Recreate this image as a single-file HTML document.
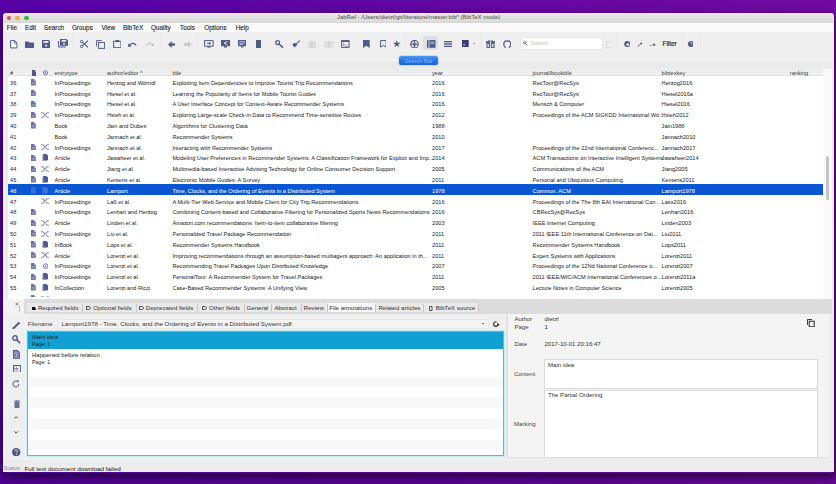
<!DOCTYPE html>
<html><head><meta charset="utf-8">
<style>
*{margin:0;padding:0;box-sizing:border-box}
html,body{width:836px;height:484px;overflow:hidden}
body{position:relative;background:linear-gradient(180deg,rgba(0,0,0,0) 0%,rgba(0,0,0,0.1) 100%),linear-gradient(90deg,#5602a6 0%,#6206a3 50%,#700aa0 100%);font-family:"Liberation Sans",sans-serif;color:#2a2a2a}
.a{position:absolute}
#shadow{position:absolute;left:3px;top:14px;width:831px;height:459px;box-shadow:0 3px 8px 1px rgba(22,0,36,0.75);border-radius:4px}
#win{position:absolute;left:3px;top:13px;width:831px;height:459px;background:#ececec;border-radius:4px 4px 1px 1px;overflow:hidden;box-shadow:inset 0 0 0 0.6px rgba(255,235,255,0.9)}
#titlebar{position:absolute;left:3px;top:13px;width:831px;height:9.5px;background:linear-gradient(#f6e4f6 0,#f6e4f6 8%,#e6e5e6 20%,#dadada 90%,#d2d2d2 100%);border-radius:4px 4px 0 0}
.tl{position:absolute;top:15.5px;width:4.7px;height:4.7px;border-radius:50%}
#title{position:absolute;left:0.6px;width:836px;top:13.2px;height:9.5px;line-height:9.5px;text-align:center;font-size:6px;color:#4a4a4a}
#menubar{position:absolute;left:3px;top:22.5px;width:831px;height:9.5px;background:#f9f9f9}
.m{position:absolute;top:22.8px;line-height:9px;font-size:6.4px;color:#222;-webkit-text-stroke:0.1px #222}
#toolbar{position:absolute;left:3px;top:32px;width:831px;height:30px;background:#efefef}
.ti{position:absolute}
.sep{position:absolute;top:33px;width:0.8px;height:15px;background:#e7e7e7}
#table{position:absolute;left:8px;top:62px;width:815px;height:234.7px;background:#fff;overflow:hidden}
#thead{position:absolute;left:0;top:0;width:815px;height:14px;background:linear-gradient(#e8e8e8,#eeeeee 80%,#f6f6f6 86%,#dcdcdc 100%)}
.h{position:absolute;top:6.8px;line-height:8px;font-size:5.6px;color:#3a3a3a}
.row{position:absolute;left:0;width:815px;height:10.8px}
.row .c{position:absolute;top:1.8px;line-height:10.8px;font-size:5.65px;color:#2a2a2a;white-space:nowrap;-webkit-text-stroke:0.03px #2a2a2a}
.row.sel{background:#0b56d2}
.row.sel .c{color:#fff;-webkit-text-stroke:0}
.ic{position:absolute;top:1.4px}
#vscroll{position:absolute;left:823px;top:69px;width:9px;height:230px;background:#fafafa}
#thumb{position:absolute;left:825.5px;top:155.5px;width:3px;height:44px;background:#c4c4c4;border-radius:1.5px}
#tabbar{position:absolute;left:24px;top:299px;width:808px;height:15px;background:#dcdcdc}
#tableft{position:absolute;left:3px;top:299px;width:21px;height:15px;background:#f3f3f3}
.tab{position:absolute;top:303.2px;height:9px;line-height:9.6px;font-size:6.1px;color:#333;white-space:nowrap}
.tsep{position:absolute;top:304px;width:0.8px;height:7.5px;background:#c8c8c8}
#side{position:absolute;left:3px;top:314px;width:505px;height:146px;background:#efefef}
.lbl{position:absolute;font-size:6.05px;color:#444;white-space:nowrap}
#fname{position:absolute;left:58.6px;top:319.9px;width:429.5px;height:8.4px;background:#f4f4f4;border-radius:1px;box-shadow:0 0 0 0.5px #e0e0e0}
#alist{position:absolute;left:27px;top:330.6px;width:476.6px;height:125.6px;background:#fff;border:0.9px solid #70b0c0;box-shadow:0 0 0 1.2px #c8ecf4;overflow:hidden}
.ai{position:absolute;left:0;width:476px;height:18.2px}
.ai .t1{position:absolute;left:4px;top:2.6px;font-size:6px;line-height:7px;color:#222;white-space:nowrap}
.ai .t2{position:absolute;left:4px;top:9.4px;font-size:5.3px;line-height:7px;color:#222;white-space:nowrap}
#rpanel{position:absolute;left:507px;top:314px;width:321.7px;height:143.6px;background:#f4f4f4;border-left:0.8px solid #dedede;border-bottom:0.8px solid #e0e0e0;box-shadow:-2.2px 0 0 -1.4px #e4e4e4}
.ta{position:absolute;left:544.2px;width:274px;background:#fff;border:0.7px solid #dadada}
#status{position:absolute;left:3px;top:460px;width:831px;height:12px;background:#ececec}
</style></head>
<body>
<div id="shadow"></div>
<div id="win"></div>
<div id="titlebar"></div>
<div class="tl" style="left:6.65px;background:#e8524c"></div>
<div class="tl" style="left:15.25px;background:#efb034"></div>
<div class="tl" style="left:24.05px;background:#36b541"></div>
<div id="title">JabRef - /Users/dietzl/git/literature/master.bib* (BibTeX mode)</div>
<div id="menubar"></div>
<span class="m" style="left:6.8px">File</span>
<span class="m" style="left:24.9px">Edit</span>
<span class="m" style="left:43.9px">Search</span>
<span class="m" style="left:71.9px">Groups</span>
<span class="m" style="left:101.4px">View</span>
<span class="m" style="left:122.9px">BibTeX</span>
<span class="m" style="left:150.9px">Quality</span>
<span class="m" style="left:180px">Tools</span>
<span class="m" style="left:204.3px">Options</span>
<span class="m" style="left:235.7px">Help</span>
<div id="toolbar"></div>
<svg class="ti" style="left:10px;top:40px" width="7.5" height="8.5" viewBox="0 0 7.5 8.5"><path d="M0.6 0.6h4l2.3 2.3v5H0.6z" stroke="#4f5b88" stroke-width="1" fill="#fff"/><path d="M4.4 0.6v2.5h2.5" stroke="#4f5b88" stroke-width="0.9" fill="none"/></svg>
<svg class="ti" style="left:25px;top:41px" width="9" height="7" viewBox="0 0 9 7"><path d="M0 0.5h3.3l1 1H9V7H0z" fill="#4f5b88"/></svg>
<svg class="ti" style="left:42px;top:39.9px" width="8.2" height="8" viewBox="0 0 8.2 8"><path d="M0 0h6.7L8.2 1.5V8H0z" fill="#4f5b88"/><rect x="1.4" y="1" width="5" height="1.9" fill="#e8e8ee"/><circle cx="4.1" cy="5.6" r="1.15" fill="#e8e8ee"/></svg>
<svg class="ti" style="left:58px;top:39.3px" width="10" height="9.2" viewBox="0 0 10 9.2"><path d="M2 0h6.5L10 1.5V6.8H2z" fill="#4f5b88"/><rect x="3.5" y="0.9" width="4.6" height="1.9" fill="#e8e8ee"/><circle cx="6" cy="4.8" r="1" fill="#e8e8ee"/><path d="M0.6 2v6h7" stroke="#4f5b88" stroke-width="1" fill="none"/></svg>
<div class="sep" style="left:73px"></div>
<svg class="ti" style="left:79.6px;top:40px" width="8.6" height="8" viewBox="0 0 8.6 8"><circle cx="1.6" cy="1.6" r="1.2" stroke="#4f5b88" stroke-width="1" fill="none"/><circle cx="1.6" cy="6.4" r="1.2" stroke="#4f5b88" stroke-width="1" fill="none"/><path d="M2.6 2.3L8.4 7.5M2.6 5.7L8.4 0.5" stroke="#4f5b88" stroke-width="1.1"/></svg>
<svg class="ti" style="left:95.8px;top:39.8px" width="9.2" height="9" viewBox="0 0 9.2 9"><path d="M0.6 6.5V0.6h5" stroke="#4f5b88" stroke-width="1" fill="none"/><rect x="2.6" y="2.4" width="6" height="6" stroke="#4f5b88" stroke-width="1" fill="none"/></svg>
<svg class="ti" style="left:112.6px;top:40px" width="8.6" height="8.2" viewBox="0 0 8.6 8.2"><rect x="0.6" y="1.3" width="7.4" height="6.4" stroke="#4f5b88" stroke-width="1" fill="none"/><rect x="2.5" y="0" width="3.6" height="2" fill="#4f5b88"/></svg>
<svg class="ti" style="left:128.4px;top:41.5px" width="8.6" height="5" viewBox="0 0 8.6 5"><path d="M1 4.5C2 1 6 0 8.2 3.5" stroke="#4f5b88" stroke-width="1.3" fill="none"/><path d="M0 1.5L0.5 5L3.8 4z" fill="#4f5b88"/></svg>
<svg class="ti" style="left:144.8px;top:42px" width="9.6" height="4.5" viewBox="0 0 9.6 4.5"><path d="M8.6 4C7.6 1 3.6 0 1.4 3.5" stroke="#c8c8cc" stroke-width="1.3" fill="none"/><path d="M9.6 1.2L9.1 4.5L5.8 3.6z" fill="#c8c8cc"/></svg>
<div class="sep" style="left:160px"></div>
<svg class="ti" style="left:167.8px;top:40.5px" width="7.6" height="7" viewBox="0 0 7.6 7"><path d="M0 3.5L3.6 0V2.2H7.6V4.8H3.6V7z" fill="#4f5b88"/></svg>
<svg class="ti" style="left:184px;top:40.5px" width="7.6" height="7" viewBox="0 0 7.6 7"><path d="M7.6 3.5L4 0V2.2H0V4.8H4V7z" fill="#c8c8cc"/></svg>
<div class="sep" style="left:197px"></div>
<svg class="ti" style="left:204px;top:40px" width="9.7" height="7.8" viewBox="0 0 9.7 7.8"><rect x="0.6" y="0.6" width="8.5" height="5.6" stroke="#4f5b88" stroke-width="1" fill="none"/><path d="M3.5 6.2v1.4h3V6.2" fill="#4f5b88"/><path d="M3 3.4h3.5M5 2l1.5 1.4L5 4.8" stroke="#4f5b88" stroke-width="0.9" fill="none"/></svg>
<svg class="ti" style="left:221px;top:40px" width="9" height="7.6" viewBox="0 0 9 7.6"><rect x="0" y="0" width="9" height="6.2" fill="#4f5b88"/><path d="M3 6.2v1.4h3V6.2" fill="#4f5b88"/><path d="M6.5 1.5L3 3.2L6.5 4.8" stroke="#e6e6ee" stroke-width="1" fill="none"/></svg>
<svg class="ti" style="left:237.8px;top:40px" width="8.4" height="7.6" viewBox="0 0 8.4 7.6"><rect x="0" y="0" width="8.4" height="6.2" fill="#4f5b88"/><path d="M3 6.2v1.4h2.4V6.2" fill="#4f5b88"/><rect x="1.3" y="1.4" width="5.8" height="0.7" fill="#d8d8e4"/><rect x="1.3" y="2.8" width="5.8" height="0.7" fill="#d8d8e4"/><rect x="1.3" y="4.2" width="3.5" height="0.7" fill="#d8d8e4"/></svg>
<svg class="ti" style="left:255.7px;top:40px" width="5.5" height="8" viewBox="0 0 5.5 8"><rect x="0" y="0" width="5.5" height="8" fill="#4f5b88"/></svg>
<svg class="ti" style="left:275px;top:40px" width="8.7" height="8.2" viewBox="0 0 8.7 8.2"><circle cx="2.6" cy="2.6" r="1.9" stroke="#4f5b88" stroke-width="1.3" fill="none"/><path d="M4 4L8 7.7" stroke="#4f5b88" stroke-width="1.6"/></svg>
<svg class="ti" style="left:291.5px;top:40.3px" width="8.6" height="7.6" viewBox="0 0 8.6 7.6"><path d="M4.6 3.6L8.2 0.4" stroke="#4f5b88" stroke-width="1.1"/><path d="M0.4 4.2Q2.2 2.6 4.6 3.2L5.2 4.2Q4.6 6.8 2.2 7.4z" fill="#4f5b88"/></svg>
<svg class="ti" style="left:308px;top:40.5px" width="8.4" height="7.5" viewBox="0 0 8.4 7.5"><rect x="0" y="0" width="8.4" height="7.5" fill="#dedede"/><rect x="3" y="0" width="1.5" height="7.5" fill="#d0d0d0"/></svg>
<svg class="ti" style="left:324px;top:40.5px" width="9.6" height="7.5" viewBox="0 0 9.6 7.5"><rect x="0" y="0" width="9.6" height="7.5" fill="#e0e0e0"/><rect x="4" y="0" width="1.5" height="7.5" fill="#d2d2d2"/></svg>
<svg class="ti" style="left:341.2px;top:40px" width="8.7" height="8" viewBox="0 0 8.7 8"><rect x="0.6" y="0.6" width="7.5" height="6.8" stroke="#4f5b88" stroke-width="1" fill="none"/><rect x="0.6" y="0.6" width="7.5" height="1.4" fill="#4f5b88"/><path d="M2 3.4l1.6 1.3L2 6M4.3 6.2h2.5" stroke="#4f5b88" stroke-width="0.8" fill="none"/></svg>
<svg class="ti" style="left:363.4px;top:40px" width="6.7" height="8" viewBox="0 0 6.7 8"><path d="M0 0h6.7v8L3.35 5.8L0 8z" fill="#4f5b88"/></svg>
<svg class="ti" style="left:379.7px;top:40px" width="6.7" height="8" viewBox="0 0 6.7 8"><path d="M0.6 0.6h5.5v6.6L3.35 5.3L0.6 7.2z" stroke="#4f5b88" stroke-width="1" fill="none"/></svg>
<svg class="ti" style="left:392.6px;top:40px" width="7.6" height="7.6" viewBox="0 0 7.6 7.6"><path d="M3.8 0L4.7 2.7H7.6L5.3 4.4L6.2 7.3L3.8 5.6L1.4 7.3L2.3 4.4L0 2.7H2.9z" fill="#4f5b88"/></svg>
<div class="sep" style="left:404.5px"></div>
<svg class="ti" style="left:409.8px;top:40px" width="9" height="8.4" viewBox="0 0 9 8.4"><circle cx="4.5" cy="4.2" r="3.8" stroke="#4f5b88" stroke-width="1.1" fill="none"/><path d="M0.7 4.2h7.6M4.5 0.4v7.6" stroke="#4f5b88" stroke-width="1"/><circle cx="4.5" cy="4.2" r="1.6" fill="none" stroke="#4f5b88" stroke-width="0.7"/></svg>
<div class="ti" style="left:423px;top:36px;width:15px;height:14.2px;background:#e0e0e0;border-radius:1.5px"></div>
<svg class="ti" style="left:427px;top:40px" width="8.5" height="7.8" viewBox="0 0 8.5 7.8"><rect x="0" y="0" width="1.6" height="7.8" fill="#4f5b88"/><rect x="2.4" y="0" width="6.1" height="7.8" fill="#4f5b88"/><rect x="3.4" y="1.6" width="4" height="0.7" fill="#d8d8e4"/><rect x="3.4" y="3.2" width="4" height="0.7" fill="#d8d8e4"/></svg>
<svg class="ti" style="left:443.7px;top:41px" width="8.1" height="6.2" viewBox="0 0 8.1 6.2"><rect x="0" y="0" width="8.1" height="1.4" fill="#4f5b88"/><rect x="0" y="2.4" width="8.1" height="1.4" fill="#4f5b88"/><rect x="0" y="4.8" width="8.1" height="1.4" fill="#4f5b88"/></svg>
<svg class="ti" style="left:461.9px;top:40px" width="6.7" height="7" viewBox="0 0 6.7 7"><rect x="0" y="0" width="6.7" height="7" fill="#373a78"/><rect x="1.2" y="3.5" width="2" height="2.2" fill="#8f92c0"/></svg>
<svg class="ti" style="left:473.3px;top:43px" width="2.4" height="1.6" viewBox="0 0 2.4 1.6"><path d="M0 0h2.4L1.2 1.6z" fill="#9a9a9a"/></svg>
<div class="sep" style="left:481px"></div>
<svg class="ti" style="left:486.2px;top:40px" width="9.1" height="8" viewBox="0 0 9.1 8"><rect x="0.5" y="2" width="8.1" height="6" fill="#4f5b88"/><rect x="0" y="1.2" width="9.1" height="2" fill="#4f5b88"/><rect x="4" y="1.2" width="1.1" height="6.8" fill="#dcdce6"/><rect x="1.5" y="4" width="1.5" height="3" fill="#dcdce6"/><rect x="6" y="4" width="1.5" height="3" fill="#dcdce6"/><path d="M2 0.2L4.5 1.4L7 0.2" stroke="#4f5b88" stroke-width="0.8" fill="none"/></svg>
<svg class="ti" style="left:502.5px;top:40px" width="8.6" height="8.2" viewBox="0 0 8.6 8.2"><circle cx="4.3" cy="4.3" r="3.5" stroke="#4f5b88" stroke-width="1.3" fill="none"/><rect x="2.8" y="5.5" width="3" height="3" fill="#efefef"/><path d="M2 0.6L3 2M6.6 0.6L5.6 2" stroke="#4f5b88" stroke-width="0.9"/></svg>
<div class="ti" style="left:521px;top:38.3px;width:80.5px;height:10.3px;background:#fff;border-radius:1.5px;box-shadow:0 0 0 0.5px #e0e0e0"></div>
<svg class="ti" style="left:523px;top:41px" width="4.5" height="4.5" viewBox="0 0 4.5 4.5"><circle cx="1.6" cy="1.6" r="1.1" stroke="#555" stroke-width="0.9" fill="none"/><path d="M2.4 2.4L4.2 4.2" stroke="#555" stroke-width="1"/></svg>
<span class="ti" style="left:530.5px;top:39px;line-height:9px;font-size:5.6px;color:#c0c0c0">Search...</span>
<svg class="ti" style="left:605.8px;top:40.5px" width="5.7" height="7" viewBox="0 0 5.7 7"><rect x="0.4" y="0.4" width="4.9" height="6.2" stroke="#dadada" stroke-width="0.8" fill="none"/></svg>
<div class="sep" style="left:617px"></div>
<svg class="ti" style="left:623.7px;top:41.2px" width="6.5" height="6" viewBox="0 0 6.5 6"><circle cx="3.25" cy="3" r="3" fill="#4f5b88"/><circle cx="3.8" cy="3.5" r="1.5" fill="#dde"/></svg>
<svg class="ti" style="left:637.3px;top:41.5px" width="5.7" height="5.5" viewBox="0 0 5.7 5.5"><path d="M0.5 5L4 1.5" stroke="#555" stroke-width="0.9"/><path d="M4.2 0L4.8 1L5.7 1.3L4.8 1.7L4.2 2.7L3.8 1.7L3 1.3L3.8 1z" fill="#555"/></svg>
<svg class="ti" style="left:649.5px;top:42.5px" width="6.5" height="3.5" viewBox="0 0 6.5 3.5"><rect x="0" y="2" width="1.2" height="1.2" fill="#555"/><path d="M2.5 1.8h3M4 0.3v3M2.8 0.8l2.4 2M5.2 0.8l-2.4 2" stroke="#555" stroke-width="0.6"/></svg>
<span class="ti" style="left:662.5px;top:39px;line-height:9px;font-size:6.4px;color:#222;-webkit-text-stroke:0.15px #222">Filter</span>
<div class="sep" style="left:681.5px"></div>
<svg class="ti" style="left:687.6px;top:41.2px" width="5.9" height="5.9" viewBox="0 0 5.9 5.9"><circle cx="2.95" cy="2.95" r="2.95" fill="#4f5b88"/><path d="M2.1 2.2a0.9 0.9 0 1 1 1.2 0.9v0.6" stroke="#dde" stroke-width="0.7" fill="none"/></svg>
<div class="sep" style="left:700px"></div>
<div id="table">
<div id="thead"></div>
<span class="h" style="left:2px">#</span>
<svg class="a" style="left:24px;top:7.6px" width="4.4" height="6.2" viewBox="0 0 4.4 6.2"><path d="M0 0h2.8L4.4 1.6V6.2H0z" fill="#4f5888"/><path d="M2.8 0v1.6H4.4" fill="#b9bed6"/></svg><svg class="a" style="left:35.4px;top:7.8px" width="5" height="5.8" viewBox="0 0 5 5.8"><circle cx="2.5" cy="2.9" r="2.1" stroke="#6e78a8" stroke-width="1" fill="none"/><circle cx="2.5" cy="2.9" r="0.8" fill="#6e78a8"/></svg><span class="h" style="left:46.5px">entrytype</span>
<span class="h" style="left:99px">author/editor ^</span>
<span class="h" style="left:164.4px">title</span>
<span class="h" style="left:424px">year</span>
<span class="h" style="left:524.6px">journal/booktitle</span>
<span class="h" style="left:653.6px">bibtexkey</span>
<span class="h" style="left:781.8px">ranking</span>
<div style="position:absolute;left:0;top:14px;width:815px;height:224px">
<div class="row" style="top:0.0px"><span class="c" style="left:2px">36</span><svg class="ic" style="left:23.4px;top:3.2px" width="4.8" height="6.4" viewBox="0 0 4.8 6.4"><path d="M0 0h3L4.8 1.8V6.4H0z" fill="#69739f"/><path d="M3 0v1.8H4.8" fill="#c5cae0"/><rect x="0.8" y="3.2" width="3.2" height="0.6" fill="#aab2d0"/><rect x="0.8" y="4.6" width="3.2" height="0.6" fill="#aab2d0"/></svg><span class="c" style="left:46.5px">InProceedings</span><span class="c" style="left:99px">Herzog and Wörndl</span><span class="c" style="left:164.4px">Exploiting Item Dependencies to Improve Tourist Trip Recommendations</span><span class="c" style="left:424px">2016</span><span class="c" style="left:524.6px">RecTour@RecSys</span><span class="c" style="left:653.6px">Herzog2016</span></div>
<div class="row" style="top:10.8px"><span class="c" style="left:2px">37</span><svg class="ic" style="left:23.4px;top:3.2px" width="4.8" height="6.4" viewBox="0 0 4.8 6.4"><path d="M0 0h3L4.8 1.8V6.4H0z" fill="#69739f"/><path d="M3 0v1.8H4.8" fill="#c5cae0"/><rect x="0.8" y="3.2" width="3.2" height="0.6" fill="#aab2d0"/><rect x="0.8" y="4.6" width="3.2" height="0.6" fill="#aab2d0"/></svg><span class="c" style="left:46.5px">InProceedings</span><span class="c" style="left:99px">Hiesel et al.</span><span class="c" style="left:164.4px">Learning the Popularity of Items for Mobile Tourist Guides</span><span class="c" style="left:424px">2016</span><span class="c" style="left:524.6px">RecTour@RecSys</span><span class="c" style="left:653.6px">Hiesel2016a</span></div>
<div class="row" style="top:21.6px"><span class="c" style="left:2px">38</span><svg class="ic" style="left:23.4px;top:3.2px" width="4.8" height="6.4" viewBox="0 0 4.8 6.4"><path d="M0 0h3L4.8 1.8V6.4H0z" fill="#69739f"/><path d="M3 0v1.8H4.8" fill="#c5cae0"/><rect x="0.8" y="3.2" width="3.2" height="0.6" fill="#aab2d0"/><rect x="0.8" y="4.6" width="3.2" height="0.6" fill="#aab2d0"/></svg><span class="c" style="left:46.5px">InProceedings</span><span class="c" style="left:99px">Hiesel et al.</span><span class="c" style="left:164.4px">A User Interface Concept for Context-Aware Recommender Systems</span><span class="c" style="left:424px">2016</span><span class="c" style="left:524.6px">Mensch &amp; Computer</span><span class="c" style="left:653.6px">Hiesel2016</span></div>
<div class="row" style="top:32.4px"><span class="c" style="left:2px">39</span><svg class="ic" style="left:23.4px;top:3.2px" width="4.8" height="6.4" viewBox="0 0 4.8 6.4"><path d="M0 0h3L4.8 1.8V6.4H0z" fill="#69739f"/><path d="M3 0v1.8H4.8" fill="#c5cae0"/><rect x="0.8" y="3.2" width="3.2" height="0.6" fill="#aab2d0"/><rect x="0.8" y="4.6" width="3.2" height="0.6" fill="#aab2d0"/></svg><svg class="ic" style="left:33px;top:3.6px" width="8.2" height="6" viewBox="0 0 8.2 6"><path d="M2 0.8L6.2 5.2M6.2 0.8L2 5.2M0 0.7h2.3M5.9 0.7h2.3M0 5.3h2.3M5.9 5.3h2.3" stroke="#8890b6" stroke-width="1.1" fill="none"/></svg><span class="c" style="left:46.5px">InProceedings</span><span class="c" style="left:99px">Hsieh et al.</span><span class="c" style="left:164.4px">Exploring Large-scale Check-in Data to Recommend Time-sensitive Routes</span><span class="c" style="left:424px">2012</span><span class="c" style="left:524.6px">Proceedings of the ACM SIGKDD International Wo...</span><span class="c" style="left:653.6px">Hsieh2012</span></div>
<div class="row" style="top:43.2px"><span class="c" style="left:2px">40</span><svg class="ic" style="left:23.4px;top:3.2px" width="4.8" height="6.4" viewBox="0 0 4.8 6.4"><path d="M0 0h3L4.8 1.8V6.4H0z" fill="#69739f"/><path d="M3 0v1.8H4.8" fill="#c5cae0"/><rect x="0.8" y="3.2" width="3.2" height="0.6" fill="#aab2d0"/><rect x="0.8" y="4.6" width="3.2" height="0.6" fill="#aab2d0"/></svg><span class="c" style="left:46.5px">Book</span><span class="c" style="left:99px">Jain and Dubes</span><span class="c" style="left:164.4px">Algorithms for Clustering Data</span><span class="c" style="left:424px">1988</span><span class="c" style="left:524.6px"></span><span class="c" style="left:653.6px">Jain1988</span></div>
<div class="row" style="top:54.0px"><span class="c" style="left:2px">41</span><span class="c" style="left:46.5px">Book</span><span class="c" style="left:99px">Jannach et al.</span><span class="c" style="left:164.4px">Recommender Systems</span><span class="c" style="left:424px">2010</span><span class="c" style="left:524.6px"></span><span class="c" style="left:653.6px">Jannach2010</span></div>
<div class="row" style="top:64.8px"><span class="c" style="left:2px">42</span><svg class="ic" style="left:23.4px;top:3.2px" width="4.8" height="6.4" viewBox="0 0 4.8 6.4"><path d="M0 0h3L4.8 1.8V6.4H0z" fill="#69739f"/><path d="M3 0v1.8H4.8" fill="#c5cae0"/><rect x="0.8" y="3.2" width="3.2" height="0.6" fill="#aab2d0"/><rect x="0.8" y="4.6" width="3.2" height="0.6" fill="#aab2d0"/></svg><svg class="ic" style="left:33px;top:3.6px" width="8.2" height="6" viewBox="0 0 8.2 6"><path d="M2 0.8L6.2 5.2M6.2 0.8L2 5.2M0 0.7h2.3M5.9 0.7h2.3M0 5.3h2.3M5.9 5.3h2.3" stroke="#8890b6" stroke-width="1.1" fill="none"/></svg><span class="c" style="left:46.5px">InProceedings</span><span class="c" style="left:99px">Jannach et al.</span><span class="c" style="left:164.4px">Interacting with Recommender Systems</span><span class="c" style="left:424px">2017</span><span class="c" style="left:524.6px">Proceedings of the 22nd International Conferenc...</span><span class="c" style="left:653.6px">Jannach2017</span></div>
<div class="row" style="top:75.6px"><span class="c" style="left:2px">43</span><svg class="ic" style="left:23.4px;top:3.2px" width="4.8" height="6.4" viewBox="0 0 4.8 6.4"><path d="M0 0h3L4.8 1.8V6.4H0z" fill="#69739f"/><path d="M3 0v1.8H4.8" fill="#c5cae0"/><rect x="0.8" y="3.2" width="3.2" height="0.6" fill="#aab2d0"/><rect x="0.8" y="4.6" width="3.2" height="0.6" fill="#aab2d0"/></svg><svg class="ic" style="left:34px;top:2.8px" width="6.2" height="7" viewBox="0 0 6.2 7"><path d="M1.2 0h3.2L6.2 1.8V6.2H1.2z" fill="#4f5b90"/><path d="M0.4 0.8v5.8h4.6" stroke="#4f5b90" stroke-width="0.7" fill="none" opacity="0.7"/></svg><span class="c" style="left:46.5px">Article</span><span class="c" style="left:99px">Jawaheer et al.</span><span class="c" style="left:164.4px">Modeling User Preferences in Recommender Systems: A Classification Framework for Explicit and Imp...</span><span class="c" style="left:424px">2014</span><span class="c" style="left:524.6px">ACM Transactions on Interactive Intelligent Systems</span><span class="c" style="left:653.6px">Jawaheer2014</span></div>
<div class="row" style="top:86.4px"><span class="c" style="left:2px">44</span><svg class="ic" style="left:23.4px;top:3.2px" width="4.8" height="6.4" viewBox="0 0 4.8 6.4"><path d="M0 0h3L4.8 1.8V6.4H0z" fill="#69739f"/><path d="M3 0v1.8H4.8" fill="#c5cae0"/><rect x="0.8" y="3.2" width="3.2" height="0.6" fill="#aab2d0"/><rect x="0.8" y="4.6" width="3.2" height="0.6" fill="#aab2d0"/></svg><svg class="ic" style="left:33px;top:3.6px" width="8.2" height="6" viewBox="0 0 8.2 6"><path d="M2 0.8L6.2 5.2M6.2 0.8L2 5.2M0 0.7h2.3M5.9 0.7h2.3M0 5.3h2.3M5.9 5.3h2.3" stroke="#8890b6" stroke-width="1.1" fill="none"/></svg><span class="c" style="left:46.5px">Article</span><span class="c" style="left:99px">Jiang et al.</span><span class="c" style="left:164.4px">Multimedia-based Interactive Advising Technology for Online Consumer Decision Support</span><span class="c" style="left:424px">2005</span><span class="c" style="left:524.6px">Communications of the ACM</span><span class="c" style="left:653.6px">Jiang2005</span></div>
<div class="row" style="top:97.2px"><span class="c" style="left:2px">45</span><svg class="ic" style="left:23.4px;top:3.2px" width="4.8" height="6.4" viewBox="0 0 4.8 6.4"><path d="M0 0h3L4.8 1.8V6.4H0z" fill="#69739f"/><path d="M3 0v1.8H4.8" fill="#c5cae0"/><rect x="0.8" y="3.2" width="3.2" height="0.6" fill="#aab2d0"/><rect x="0.8" y="4.6" width="3.2" height="0.6" fill="#aab2d0"/></svg><svg class="ic" style="left:34px;top:2.8px" width="6.2" height="7" viewBox="0 0 6.2 7"><path d="M1.2 0h3.2L6.2 1.8V6.2H1.2z" fill="#4f5b90"/><path d="M0.4 0.8v5.8h4.6" stroke="#4f5b90" stroke-width="0.7" fill="none" opacity="0.7"/></svg><span class="c" style="left:46.5px">Article</span><span class="c" style="left:99px">Kenteris et al.</span><span class="c" style="left:164.4px">Electronic Mobile Guides: A Survey</span><span class="c" style="left:424px">2011</span><span class="c" style="left:524.6px">Personal and Ubiquitous Computing</span><span class="c" style="left:653.6px">Kenteris2011</span></div>
<div class="row sel" style="top:108.0px"><span class="c" style="left:2px">46</span><svg class="ic" style="left:23.4px;top:3.2px" width="4.8" height="6.4" viewBox="0 0 4.8 6.4"><path d="M0 0h3L4.8 1.8V6.4H0z" fill="#3c6cd0"/><path d="M3 0v1.8H4.8" fill="#3c6cd0"/><rect x="0.8" y="3.2" width="3.2" height="0.6" fill="#3c6cd0"/><rect x="0.8" y="4.6" width="3.2" height="0.6" fill="#3c6cd0"/></svg><svg class="ic" style="left:34px;top:2.8px" width="6.2" height="7" viewBox="0 0 6.2 7"><path d="M1.2 0h3.2L6.2 1.8V6.2H1.2z" fill="#4070d2"/><path d="M0.4 0.8v5.8h4.6" stroke="#4070d2" stroke-width="0.7" fill="none" opacity="0.7"/></svg><span class="c" style="left:46.5px">Article</span><span class="c" style="left:99px">Lamport</span><span class="c" style="left:164.4px">Time, Clocks, and the Ordering of Events in a Distributed System</span><span class="c" style="left:424px">1978</span><span class="c" style="left:524.6px">Commun. ACM</span><span class="c" style="left:653.6px">Lamport1978</span></div>
<div class="row" style="top:118.8px"><span class="c" style="left:2px">47</span><svg class="ic" style="left:33px;top:3.6px" width="8.2" height="6" viewBox="0 0 8.2 6"><path d="M2 0.8L6.2 5.2M6.2 0.8L2 5.2M0 0.7h2.3M5.9 0.7h2.3M0 5.3h2.3M5.9 5.3h2.3" stroke="#8890b6" stroke-width="1.1" fill="none"/></svg><span class="c" style="left:46.5px">InProceedings</span><span class="c" style="left:99px">Laß et al.</span><span class="c" style="left:164.4px">A Multi-Tier Web Service and Mobile Client for City Trip Recommendations</span><span class="c" style="left:424px">2016</span><span class="c" style="left:524.6px">Proceedings of the The 8th EAI International Con...</span><span class="c" style="left:653.6px">Lass2016</span></div>
<div class="row" style="top:129.6px"><span class="c" style="left:2px">48</span><svg class="ic" style="left:23.4px;top:3.2px" width="4.8" height="6.4" viewBox="0 0 4.8 6.4"><path d="M0 0h3L4.8 1.8V6.4H0z" fill="#69739f"/><path d="M3 0v1.8H4.8" fill="#c5cae0"/><rect x="0.8" y="3.2" width="3.2" height="0.6" fill="#aab2d0"/><rect x="0.8" y="4.6" width="3.2" height="0.6" fill="#aab2d0"/></svg><span class="c" style="left:46.5px">InProceedings</span><span class="c" style="left:99px">Lenhart and Herzog</span><span class="c" style="left:164.4px">Combining Content-based and Collaborative Filtering for Personalized Sports News Recommendations</span><span class="c" style="left:424px">2016</span><span class="c" style="left:524.6px">CBRecSys@RecSys</span><span class="c" style="left:653.6px">Lenhart2016</span></div>
<div class="row" style="top:140.4px"><span class="c" style="left:2px">49</span><svg class="ic" style="left:23.4px;top:3.2px" width="4.8" height="6.4" viewBox="0 0 4.8 6.4"><path d="M0 0h3L4.8 1.8V6.4H0z" fill="#69739f"/><path d="M3 0v1.8H4.8" fill="#c5cae0"/><rect x="0.8" y="3.2" width="3.2" height="0.6" fill="#aab2d0"/><rect x="0.8" y="4.6" width="3.2" height="0.6" fill="#aab2d0"/></svg><svg class="ic" style="left:33px;top:3.6px" width="8.2" height="6" viewBox="0 0 8.2 6"><path d="M2 0.8L6.2 5.2M6.2 0.8L2 5.2M0 0.7h2.3M5.9 0.7h2.3M0 5.3h2.3M5.9 5.3h2.3" stroke="#8890b6" stroke-width="1.1" fill="none"/></svg><span class="c" style="left:46.5px">Article</span><span class="c" style="left:99px">Linden et al.</span><span class="c" style="left:164.4px">Amazon.com recommendations: Item-to-item collaborative filtering</span><span class="c" style="left:424px">2003</span><span class="c" style="left:524.6px">IEEE Internet Computing</span><span class="c" style="left:653.6px">Linden2003</span></div>
<div class="row" style="top:151.2px"><span class="c" style="left:2px">50</span><svg class="ic" style="left:23.4px;top:3.2px" width="4.8" height="6.4" viewBox="0 0 4.8 6.4"><path d="M0 0h3L4.8 1.8V6.4H0z" fill="#69739f"/><path d="M3 0v1.8H4.8" fill="#c5cae0"/><rect x="0.8" y="3.2" width="3.2" height="0.6" fill="#aab2d0"/><rect x="0.8" y="4.6" width="3.2" height="0.6" fill="#aab2d0"/></svg><svg class="ic" style="left:33px;top:3.6px" width="8.2" height="6" viewBox="0 0 8.2 6"><path d="M2 0.8L6.2 5.2M6.2 0.8L2 5.2M0 0.7h2.3M5.9 0.7h2.3M0 5.3h2.3M5.9 5.3h2.3" stroke="#8890b6" stroke-width="1.1" fill="none"/></svg><span class="c" style="left:46.5px">InProceedings</span><span class="c" style="left:99px">Liu et al.</span><span class="c" style="left:164.4px">Personalized Travel Package Recommendation</span><span class="c" style="left:424px">2011</span><span class="c" style="left:524.6px">2011 IEEE 11th International Conference on Dat...</span><span class="c" style="left:653.6px">Liu2011</span></div>
<div class="row" style="top:162.0px"><span class="c" style="left:2px">51</span><svg class="ic" style="left:23.4px;top:3.2px" width="4.8" height="6.4" viewBox="0 0 4.8 6.4"><path d="M0 0h3L4.8 1.8V6.4H0z" fill="#69739f"/><path d="M3 0v1.8H4.8" fill="#c5cae0"/><rect x="0.8" y="3.2" width="3.2" height="0.6" fill="#aab2d0"/><rect x="0.8" y="4.6" width="3.2" height="0.6" fill="#aab2d0"/></svg><svg class="ic" style="left:34px;top:2.8px" width="6.2" height="7" viewBox="0 0 6.2 7"><path d="M1.2 0h3.2L6.2 1.8V6.2H1.2z" fill="#4f5b90"/><path d="M0.4 0.8v5.8h4.6" stroke="#4f5b90" stroke-width="0.7" fill="none" opacity="0.7"/></svg><span class="c" style="left:46.5px">InBook</span><span class="c" style="left:99px">Lops et al.</span><span class="c" style="left:164.4px">Recommender Systems Handbook</span><span class="c" style="left:424px">2011</span><span class="c" style="left:524.6px">Recommender Systems Handbook</span><span class="c" style="left:653.6px">Lops2011</span></div>
<div class="row" style="top:172.8px"><span class="c" style="left:2px">52</span><svg class="ic" style="left:23.4px;top:3.2px" width="4.8" height="6.4" viewBox="0 0 4.8 6.4"><path d="M0 0h3L4.8 1.8V6.4H0z" fill="#69739f"/><path d="M3 0v1.8H4.8" fill="#c5cae0"/><rect x="0.8" y="3.2" width="3.2" height="0.6" fill="#aab2d0"/><rect x="0.8" y="4.6" width="3.2" height="0.6" fill="#aab2d0"/></svg><svg class="ic" style="left:33px;top:3.6px" width="8.2" height="6" viewBox="0 0 8.2 6"><path d="M2 0.8L6.2 5.2M6.2 0.8L2 5.2M0 0.7h2.3M5.9 0.7h2.3M0 5.3h2.3M5.9 5.3h2.3" stroke="#8890b6" stroke-width="1.1" fill="none"/></svg><span class="c" style="left:46.5px">Article</span><span class="c" style="left:99px">Lorenzi et al.</span><span class="c" style="left:164.4px">Improving recommendations through an assumption-based multiagent approach: An application in th...</span><span class="c" style="left:424px">2011</span><span class="c" style="left:524.6px">Expert Systems with Applications</span><span class="c" style="left:653.6px">Lorenzi2011</span></div>
<div class="row" style="top:183.6px"><span class="c" style="left:2px">53</span><svg class="ic" style="left:23.4px;top:3.2px" width="4.8" height="6.4" viewBox="0 0 4.8 6.4"><path d="M0 0h3L4.8 1.8V6.4H0z" fill="#69739f"/><path d="M3 0v1.8H4.8" fill="#c5cae0"/><rect x="0.8" y="3.2" width="3.2" height="0.6" fill="#aab2d0"/><rect x="0.8" y="4.6" width="3.2" height="0.6" fill="#aab2d0"/></svg><svg class="ic" style="left:34.5px;top:3px" width="5.6" height="6.2" viewBox="0 0 5.6 6.2"><circle cx="2.8" cy="3.1" r="2.3" stroke="#6a73a0" stroke-width="1" fill="none"/><circle cx="2.8" cy="3.1" r="0.9" fill="#6a73a0"/></svg><span class="c" style="left:46.5px">InProceedings</span><span class="c" style="left:99px">Lorenzi et al.</span><span class="c" style="left:164.4px">Recommending Travel Packages Upon Distributed Knowledge</span><span class="c" style="left:424px">2007</span><span class="c" style="left:524.6px">Proceedings of the 12Nd National Conference o...</span><span class="c" style="left:653.6px">Lorenzi2007</span></div>
<div class="row" style="top:194.4px"><span class="c" style="left:2px">54</span><svg class="ic" style="left:23.4px;top:3.2px" width="4.8" height="6.4" viewBox="0 0 4.8 6.4"><path d="M0 0h3L4.8 1.8V6.4H0z" fill="#69739f"/><path d="M3 0v1.8H4.8" fill="#c5cae0"/><rect x="0.8" y="3.2" width="3.2" height="0.6" fill="#aab2d0"/><rect x="0.8" y="4.6" width="3.2" height="0.6" fill="#aab2d0"/></svg><svg class="ic" style="left:34px;top:2.8px" width="6.2" height="7" viewBox="0 0 6.2 7"><path d="M1.2 0h3.2L6.2 1.8V6.2H1.2z" fill="#4f5b90"/><path d="M0.4 0.8v5.8h4.6" stroke="#4f5b90" stroke-width="0.7" fill="none" opacity="0.7"/></svg><span class="c" style="left:46.5px">InProceedings</span><span class="c" style="left:99px">Lorenzi et al.</span><span class="c" style="left:164.4px">PersonalTour: A Recommender System for Travel Packages</span><span class="c" style="left:424px">2011</span><span class="c" style="left:524.6px">2011 IEEE/WIC/ACM International Conferences o...</span><span class="c" style="left:653.6px">Lorenzi2011a</span></div>
<div class="row" style="top:205.2px"><span class="c" style="left:2px">55</span><svg class="ic" style="left:23.4px;top:3.2px" width="4.8" height="6.4" viewBox="0 0 4.8 6.4"><path d="M0 0h3L4.8 1.8V6.4H0z" fill="#69739f"/><path d="M3 0v1.8H4.8" fill="#c5cae0"/><rect x="0.8" y="3.2" width="3.2" height="0.6" fill="#aab2d0"/><rect x="0.8" y="4.6" width="3.2" height="0.6" fill="#aab2d0"/></svg><svg class="ic" style="left:34px;top:2.8px" width="6.2" height="7" viewBox="0 0 6.2 7"><path d="M1.2 0h3.2L6.2 1.8V6.2H1.2z" fill="#4f5b90"/><path d="M0.4 0.8v5.8h4.6" stroke="#4f5b90" stroke-width="0.7" fill="none" opacity="0.7"/></svg><span class="c" style="left:46.5px">InCollection</span><span class="c" style="left:99px">Lorenzi and Ricci</span><span class="c" style="left:164.4px">Case-Based Recommender Systems: A Unifying View</span><span class="c" style="left:424px">2005</span><span class="c" style="left:524.6px">Lecture Notes in Computer Science</span><span class="c" style="left:653.6px">Lorenzi2005</span></div>
<div class="row" style="top:216.0px"><span class="c" style="left:2px">56</span><svg class="ic" style="left:23.4px;top:3.2px" width="4.8" height="6.4" viewBox="0 0 4.8 6.4"><path d="M0 0h3L4.8 1.8V6.4H0z" fill="#69739f"/><path d="M3 0v1.8H4.8" fill="#c5cae0"/><rect x="0.8" y="3.2" width="3.2" height="0.6" fill="#aab2d0"/><rect x="0.8" y="4.6" width="3.2" height="0.6" fill="#aab2d0"/></svg><svg class="ic" style="left:33px;top:3.6px" width="8.2" height="6" viewBox="0 0 8.2 6"><path d="M2 0.8L6.2 5.2M6.2 0.8L2 5.2M0 0.7h2.3M5.9 0.7h2.3M0 5.3h2.3M5.9 5.3h2.3" stroke="#8890b6" stroke-width="1.1" fill="none"/></svg><span class="c" style="left:46.5px">InProceedings</span><span class="c" style="left:99px">Lorenzi et al.</span><span class="c" style="left:164.4px">Recommending Travel Packages</span><span class="c" style="left:424px">2011</span><span class="c" style="left:524.6px">Proceedings</span><span class="c" style="left:653.6px">Lorenzi2011b</span></div>
</div>
</div>
<div class="a" style="left:8px;top:296.7px;width:815px;height:2.3px;background:#fff"></div><div id="vscroll"></div>
<div id="thumb"></div>
<div class="a" style="left:399px;top:56.3px;width:39px;height:9px;border-radius:2px;background:linear-gradient(#4f98f2,#2a74e6 50%,#1d62d8);box-shadow:0 0 0 0.7px #b5d8fc"></div><span class="a" style="left:399px;top:56.5px;width:39px;text-align:center;line-height:9px;font-size:5.6px;color:#7fb4f6">Search Bar</span>
<div id="tableft"></div><div id="tabbar"></div>
<div class="a" style="left:27px;top:303.2px;width:450.5px;height:8.9px;background:#e9e9e9"></div>
<div class="a" style="left:327px;top:303.2px;width:47.5px;height:8.9px;background:#f6f6f6"></div>
<svg class="ti" style="left:31.7px;top:306.6px" width="4.4" height="3.8" viewBox="0 0 4.4 3.8"><path d="M0 0h2.6L4.4 1.9L2.6 3.8H0z" fill="#111"/></svg><span class="tab" style="left:37.9px">Required fields</span>
<div class="tsep" style="left:82px"></div>
<svg class="ti" style="left:85.9px;top:306.3px" width="5.2" height="4.2" viewBox="0 0 5.2 4.2"><path d="M0.5 0.5h2.8L4.7 2.1L3.3 3.7H0.5z" stroke="#333" stroke-width="0.9" fill="none"/></svg><span class="tab" style="left:93.2px">Optional fields</span>
<div class="tsep" style="left:135.5px"></div>
<svg class="ti" style="left:138.5px;top:306.3px" width="5.2" height="4.2" viewBox="0 0 5.2 4.2"><path d="M0.5 0.5h2.8L4.7 2.1L3.3 3.7H0.5z" stroke="#333" stroke-width="0.9" fill="none"/></svg><span class="tab" style="left:145.8px">Deprecated fields</span>
<div class="tsep" style="left:196.7px"></div>
<svg class="ti" style="left:201.7px;top:306.3px" width="5.2" height="4.2" viewBox="0 0 5.2 4.2"><path d="M0.5 0.5h2.8L4.7 2.1L3.3 3.7H0.5z" stroke="#333" stroke-width="0.9" fill="none"/></svg><span class="tab" style="left:209px">Other fields</span>
<div class="tsep" style="left:244px"></div>
<span class="tab" style="left:246.5px">General</span>
<div class="tsep" style="left:270.5px"></div>
<span class="tab" style="left:274.4px">Abstract</span>
<div class="tsep" style="left:300.5px"></div>
<span class="tab" style="left:303.8px">Review</span>
<div class="tsep" style="left:326.5px"></div>
<span class="tab" style="left:329.2px">File annotations</span>
<div class="tsep" style="left:375px"></div>
<span class="tab" style="left:378.4px">Related articles</span>
<div class="tsep" style="left:423.3px"></div>
<svg class="ti" style="left:429.0px;top:305.8px" width="4" height="5" viewBox="0 0 4 5"><path d="M0.5 0.5h2.5v4H0.5z" stroke="#333" stroke-width="0.8" fill="none"/></svg><span class="tab" style="left:435.8px">BibTeX source</span>
<div class="tsep" style="left:477.5px"></div>
<svg class="ti" style="left:14.5px;top:301.5px" width="4" height="4" viewBox="0 0 4 4"><path d="M0.5 0.5L3.5 3.5M3.5 0.5L0.5 3.5" stroke="#666" stroke-width="0.7"/></svg>
<svg class="ti" style="left:18.5px;top:306px" width="1.5" height="6" viewBox="0 0 1.5 6"><path d="M0.75 0v6" stroke="#999" stroke-width="0.8"/></svg>
<div id="side"></div><div class="a" style="left:25.3px;top:314px;width:1px;height:146px;background:#f8f8f8"></div>
<svg class="ti" style="left:12px;top:320.5px" width="8.4" height="8.8" viewBox="0 0 8.4 8.8"><path d="M1.4 7.4L7.4 1.4" stroke="#4f5b88" stroke-width="2.1"/><path d="M0 8.8L0.5 6.4L2.4 8.3z" fill="#4f5b88"/></svg>
<svg class="ti" style="left:12.2px;top:335px" width="8.5" height="8.7" viewBox="0 0 8.5 8.7"><circle cx="3" cy="3" r="2.2" stroke="#4f5b88" stroke-width="1.4" fill="none"/><path d="M4.5 4.5L8 8.2" stroke="#4f5b88" stroke-width="1.7"/></svg>
<svg class="ti" style="left:12.8px;top:350.4px" width="7" height="8.8" viewBox="0 0 7 8.8"><path d="M0.6 0.6h3.8L6.4 2.6V8.2H0.6z" fill="#9aa0c4" stroke="#4f5a8c" stroke-width="1.1"/><circle cx="3.4" cy="4.9" r="1.4" stroke="#4f5a8c" stroke-width="0.9" fill="#d6d9ea"/></svg>
<svg class="ti" style="left:12.5px;top:364.7px" width="8.2" height="7.8" viewBox="0 0 8.2 7.8"><rect x="0.55" y="0.55" width="7.1" height="6.7" stroke="#5a6494" stroke-width="1.1" fill="none"/><path d="M1.2 3.9h3.6M3.4 2.4l1.5 1.5L3.4 5.4" stroke="#5a6494" stroke-width="1" fill="none"/></svg>
<svg class="ti" style="left:12.4px;top:379.5px" width="8" height="8" viewBox="0 0 8 8"><path d="M6.8 4A2.9 2.9 0 1 1 5.6 1.6" stroke="#7d84aa" stroke-width="1.3" fill="none"/><path d="M4.3 0L7.4 0.5L6 3.2z" fill="#7d84aa"/></svg>
<svg class="ti" style="left:13.5px;top:399.5px" width="6" height="8" viewBox="0 0 6 8"><rect x="0.5" y="1.6" width="5" height="6.4" fill="#6a729e"/><rect x="0" y="0.6" width="6" height="1" fill="#6a729e"/><rect x="2" y="0" width="2" height="0.8" fill="#6a729e"/></svg>
<svg class="ti" style="left:14.2px;top:416.3px" width="4.4" height="2.8" viewBox="0 0 4.4 2.8"><path d="M0.5 2.4L2.2 0.7L3.9 2.4" stroke="#444" stroke-width="1" fill="none"/></svg>
<svg class="ti" style="left:14.2px;top:431.3px" width="4.4" height="2.8" viewBox="0 0 4.4 2.8"><path d="M0.5 0.4L2.2 2.1L3.9 0.4" stroke="#444" stroke-width="1" fill="none"/></svg>
<svg class="ti" style="left:12.3px;top:447.8px" width="8.4" height="8.4" viewBox="0 0 8.4 8.4"><circle cx="4.2" cy="4.2" r="4.2" fill="#4d5788"/><path d="M2.9 3.2a1.35 1.35 0 1 1 1.8 1.25v0.9" stroke="#e6e6ee" stroke-width="0.9" fill="none"/><circle cx="4.7" cy="6.5" r="0.55" fill="#e6e6ee"/></svg>
<span class="lbl" style="left:27.8px;top:320px;line-height:8px">Filename</span>
<div id="fname"></div>
<span class="lbl" style="left:61.4px;top:320px;line-height:8.8px;color:#333;font-size:6.2px">Lamport1978 - Time, Clocks, and the Ordering of Events in a Distributed System.pdf</span>
<div id="alist">
<div class="ai" style="top:0;height:17.8px;background:#12a0d3"><span class="t1">Main idea</span><span class="t2">Page: 1</span></div>
<div class="ai" style="top:17.8px"><span class="t1">Happened before relation</span><span class="t2">Page: 1</span></div>
<div class="ai" style="top:45px;height:10.4px;background:#f8f8f8"></div>
<div class="ai" style="top:65.7px;height:10.4px;background:#f8f8f8"></div>
<div class="ai" style="top:87.4px;height:10.4px;background:#f8f8f8"></div>
<div class="ai" style="top:108px;height:10.4px;background:#f8f8f8"></div>
</div>
<div id="rpanel"></div>
<span class="lbl" style="left:514.4px;top:315.5px;line-height:7.5px">Author</span>
<span class="lbl" style="left:514.4px;top:324px;line-height:7.5px">Page</span>
<span class="lbl" style="left:544.5px;top:315.5px;line-height:7.5px;color:#333">dietzl</span>
<span class="lbl" style="left:544.5px;top:324px;line-height:7.5px;color:#333">1</span>
<span class="lbl" style="left:514.4px;top:341px;line-height:7.5px">Date</span>
<span class="lbl" style="left:544.5px;top:341px;line-height:7.5px;color:#333">2017-10-01 20:16:47</span>
<span class="lbl" style="left:514px;top:371px;line-height:7.5px">Content</span>
<span class="lbl" style="left:514px;top:420.5px;line-height:7.5px">Marking</span>
<div class="ta" style="top:359.2px;height:29.8px"></div>
<div class="ta" style="top:389.8px;height:68px"></div>
<span class="lbl" style="left:548px;top:362px;line-height:7.5px;color:#333">Main idea</span>
<span class="lbl" style="left:548px;top:392px;line-height:7.5px;color:#333">The Partial Ordering</span>
<svg class="ti" style="left:493.2px;top:320.7px" width="6.8" height="6.2" viewBox="0 0 6.8 6.2"><path d="M5.2 3.1A2.3 2.3 0 1 1 3.6 0.9" stroke="#222" stroke-width="1.1" fill="none"/><path d="M6.6 3.2L4.2 5.2L4 2.2z" fill="#222"/></svg>
<svg class="ti" style="left:482px;top:323.3px" width="2.2" height="1.6" viewBox="0 0 2.2 1.6"><path d="M0 0h2.2L1.1 1.6z" fill="#555"/></svg>
<svg class="ti" style="left:807px;top:319.1px" width="7.8" height="8.3" viewBox="0 0 7.8 8.3"><path d="M0.5 6V0.5H5" stroke="#222" stroke-width="0.9" fill="none"/><rect x="2.2" y="2.2" width="5" height="5.6" stroke="#222" stroke-width="1" fill="none"/></svg>
<div id="status"></div>
<span class="lbl" style="left:3.6px;top:464.5px;line-height:7.5px;color:#8a8a8a;font-size:5.6px">Status:</span>
<span class="lbl" style="left:24.4px;top:464.5px;line-height:7.5px;color:#222;font-size:6.25px">Full text document download failed</span>
<div class="a" style="left:3px;top:13px;width:831px;height:458.5px;border:0.7px solid rgba(250,228,250,0.85);border-radius:4px 4px 1px 1px"></div>
</body></html>
